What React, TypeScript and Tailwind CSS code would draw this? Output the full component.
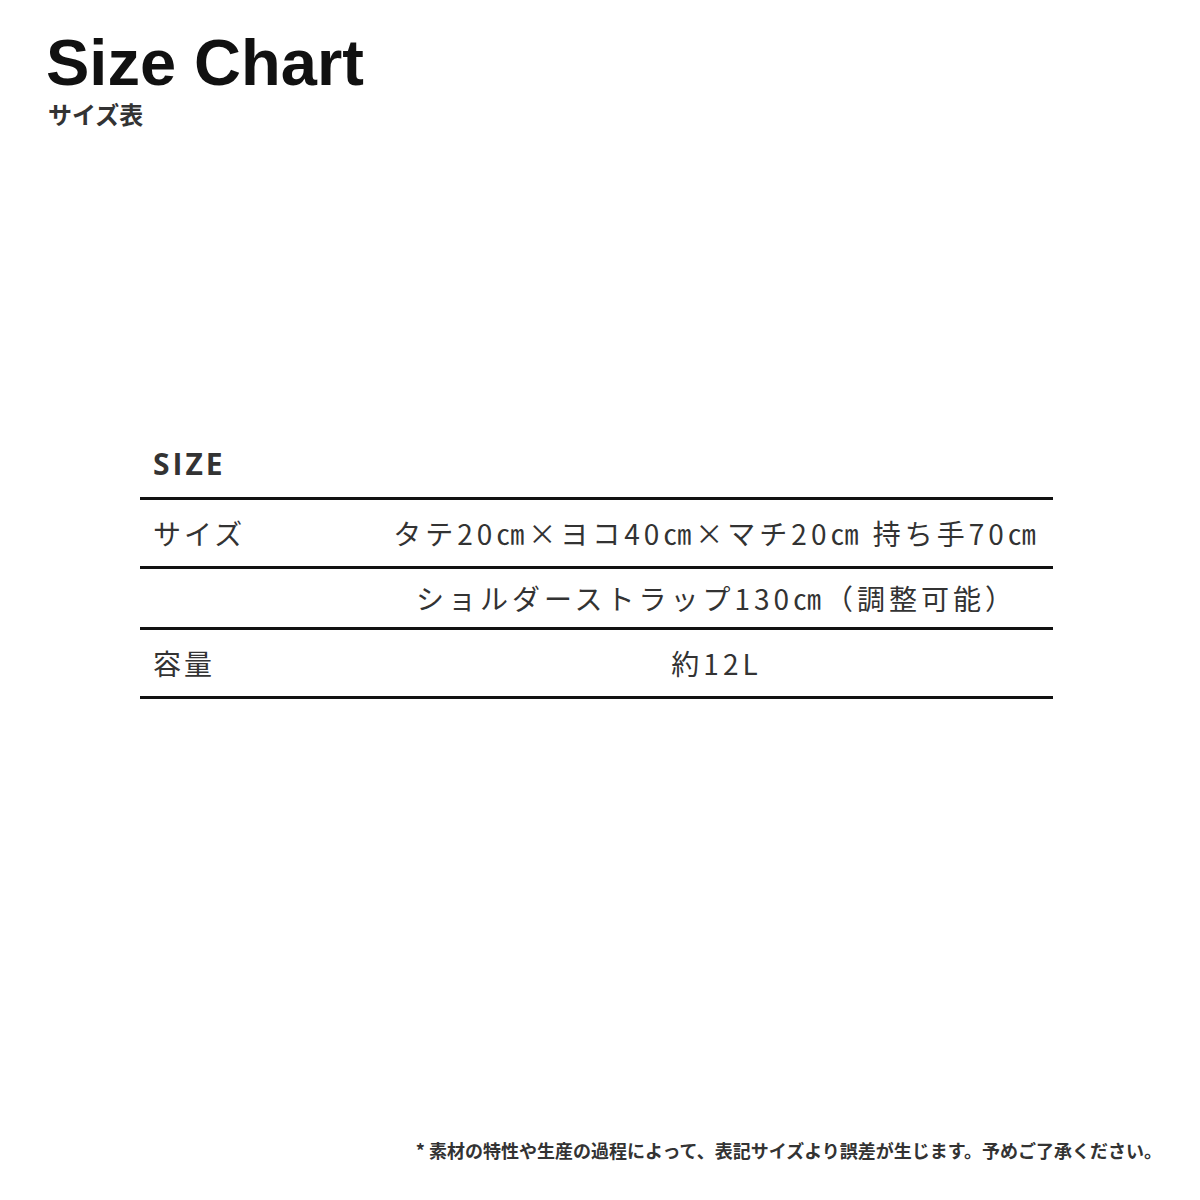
const JP = { fontFamily: '"Noto Sans CJK JP", "Noto Sans", sans-serif' };

const ROWS = [
  { label: "サイズ", value: "タテ20㎝×ヨコ40㎝×マチ20㎝ 持ち手70㎝", height: "h-[69px]" },
  { label: "", value: "ショルダーストラップ130㎝（調整可能）", height: "h-[61px]" },
  { label: "容量", value: "約12L", height: "h-[69px]" },
];

export default function App() {
  return (
    <div className="relative flex h-[1200px] w-[1200px] flex-col bg-white text-[#333]">
      <header className="pl-[46px] pt-[27px]">
        <h1 className="font-['Liberation_Sans',Arial,sans-serif] text-[65px] font-bold leading-[72px] tracking-[0px] text-[#111]">
          Size Chart
        </h1>
        <p className="mt-[1px] pl-[2px] text-[24px] font-bold leading-[28px] text-[#333]" style={JP}>
          サイズ表
        </p>
      </header>

      <section className="mx-[140px] mt-[318px] w-[913px]">
        <h2 className="pb-[15px] pl-[13px] font-['Open_Sans',sans-serif] text-[30px] font-bold leading-[36px] tracking-[3px] text-[#333]">
          SIZE
        </h2>
        <div className="border-t-[3px] border-[#111]">
          {ROWS.map((row, i) => (
            <div key={i} className={`flex items-center border-b-[3px] border-[#111] ${row.height}`} style={JP}>
              <div className="w-[240px] shrink-0 pl-[13px] text-[28px] tracking-[3px]">{row.label}</div>
              <div className="flex-1 text-center text-[28px] tracking-[4px]">{row.value}</div>
            </div>
          ))}
        </div>
      </section>

      <p className="absolute bottom-[38px] right-[38px] text-[18px] font-bold leading-[24px] text-[#333]" style={JP}>
        * 素材の特性や生産の過程によって、表記サイズより誤差が生じます。予めご了承ください。
      </p>
    </div>
  );
}
